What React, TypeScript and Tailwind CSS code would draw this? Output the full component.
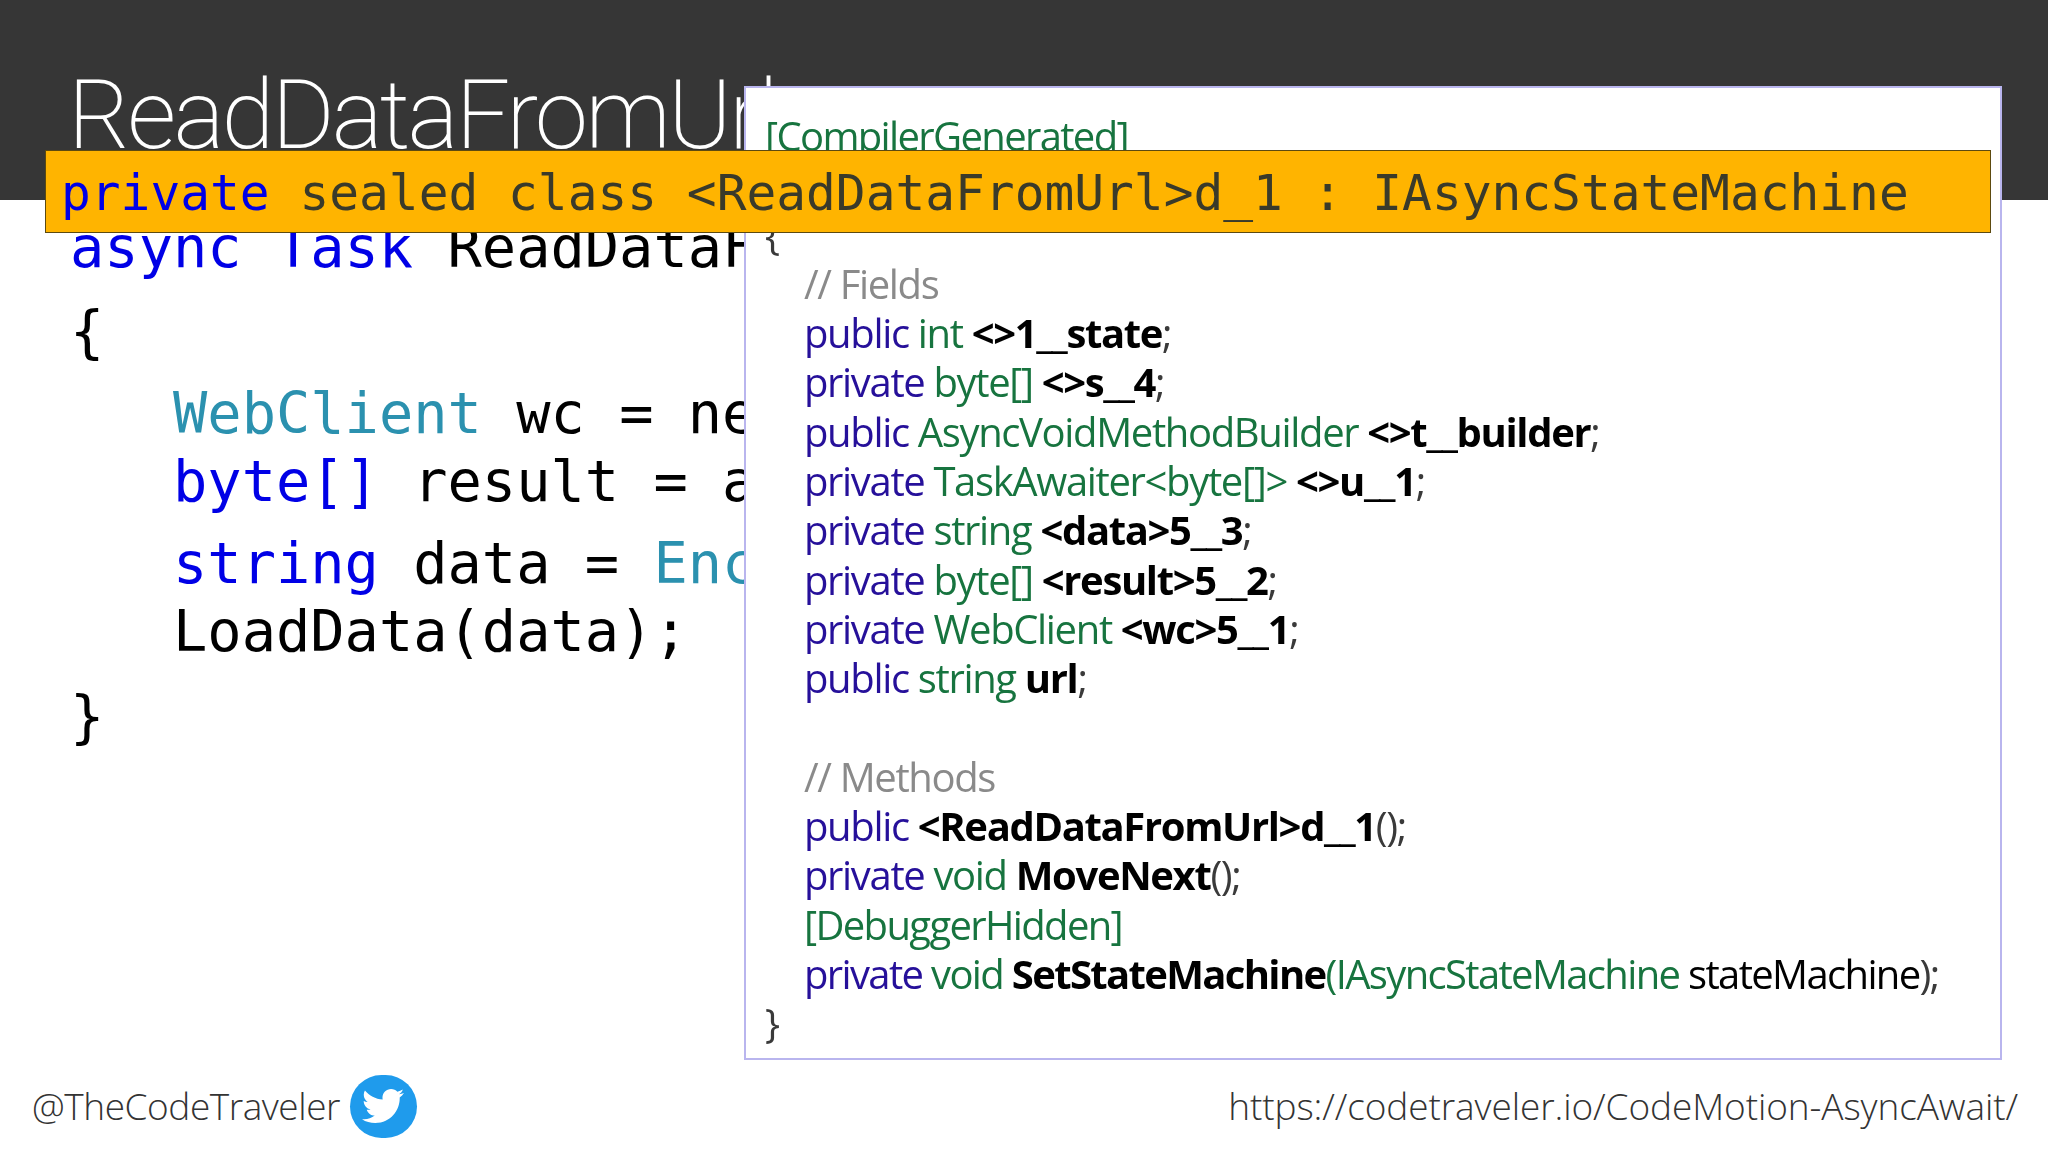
import { FaTwitter } from 'react-icons/fa';

type Tok = { t: string; c: 'k' | 'y' | 'b' | 'p' | 'n' };

const toneClass = {
  k: 'text-[#26109a]',
  y: 'text-[#17743f]',
  b: 'font-bold text-black',
  p: 'text-[#3a3a3a]',
  n: 'text-black',
};

function CodeRow({ toks, indent = true, tight = false }: { toks: Tok[]; indent?: boolean; tight?: boolean }) {
  return (
    <div className={`h-[49.3px] leading-[49.3px] whitespace-pre ${indent ? 'pl-[39px]' : ''} ${tight ? 'tracking-[-1.65px]' : ''}`}>
      {toks.map((tok, i) => (
        <span key={i} className={toneClass[tok.c]}>{tok.t}</span>
      ))}
    </div>
  );
}

const k = (t: string): Tok => ({ t, c: 'k' });
const y = (t: string): Tok => ({ t, c: 'y' });
const b = (t: string): Tok => ({ t, c: 'b' });
const p = (t: string): Tok => ({ t, c: 'p' });
const n = (t: string): Tok => ({ t, c: 'n' });

const fields: Tok[][] = [
  [k('public '), y('int '), b('<>1__state'), p(';')],
  [k('private '), y('byte[] '), b('<>s__4'), p(';')],
  [k('public '), y('AsyncVoidMethodBuilder '), b('<>t__builder'), p(';')],
  [k('private '), y('TaskAwaiter<byte[]> '), b('<>u__1'), p(';')],
  [k('private '), y('string '), b('<data>5__3'), p(';')],
  [k('private '), y('byte[] '), b('<result>5__2'), p(';')],
  [k('private '), y('WebClient '), b('<wc>5__1'), p(';')],
  [k('public '), y('string '), b('url'), p(';')],
];

export default function App() {
  return (
    <div className="relative flex h-[1152px] w-[2048px] flex-col overflow-hidden bg-white font-['Open_Sans',sans-serif]">
      <header className="h-[200px] bg-[#363636] pl-[68px] pt-[54px]">
        <h1 className="font-['Roboto',sans-serif] text-[96px] font-extralight leading-[122px] tracking-[-2.8px] text-white">ReadDataFromUrl</h1>
      </header>

      <main className="flex-1 pl-[70px] pt-[13px] font-['DejaVu_Sans_Mono',monospace] text-[57px] leading-[68px] text-black">
        <div className="whitespace-pre"><span className="text-[#0000e6]">async Task </span>ReadDataFromUrl()</div>
        <div className="mt-[16px]">{'{'}</div>
        <div className="pl-[103px]">
          <div className="mt-[14px] whitespace-pre"><span className="text-[#2b91af]">WebClient</span> wc = new</div>
          <div className="whitespace-pre"><span className="text-[#0000e6]">byte[]</span> result = a</div>
          <div className="mt-[14px] whitespace-pre"><span className="text-[#0000e6]">string</span> data = <span className="text-[#2b91af]">Enc</span></div>
          <div className="whitespace-pre">LoadData(data);</div>
        </div>
        <div className="mt-[17px]">{'}'}</div>
      </main>

      <footer className="flex h-[92px] items-center justify-between pl-[32px] pr-[30px] text-[37px] font-light tracking-[-0.1px] text-[#333333]">
        <div className="flex items-center gap-[10px]">
          <span className="tracking-[-0.45px]">@TheCodeTraveler</span>
          <span className="flex h-[63px] w-[67px] items-center justify-center rounded-full bg-[#1f9bec] text-white">
            <FaTwitter size={42} />
          </span>
        </div>
        <span>https://codetraveler.io/CodeMotion-AsyncAwait/</span>
      </footer>

      <section className="absolute left-[744px] top-[86px] h-[974px] w-[1258px] border-2 border-[#b9b5ee] bg-white pl-[19px] pt-[23px] text-[40px] tracking-[-1.35px] blur-[0.4px]">
        <CodeRow indent={false} tight toks={[y('[CompilerGenerated]')]} />
        <div className="h-[49.3px]" />
        <CodeRow indent={false} toks={[p('{')]} />
        <div className="h-[49.3px] whitespace-pre pl-[39px] leading-[49.3px] text-[#8a8a8a]">// Fields</div>
        {fields.map((toks, i) => <CodeRow key={i} toks={toks} />)}
        <div className="h-[49.3px]" />
        <div className="h-[49.3px] whitespace-pre pl-[39px] leading-[49.3px] text-[#8a8a8a]">// Methods</div>
        <CodeRow toks={[k('public '), b('<ReadDataFromUrl>d__1'), p('();')]} />
        <CodeRow toks={[k('private '), y('void '), b('MoveNext'), p('();')]} />
        <CodeRow tight toks={[y('[DebuggerHidden]')]} />
        <CodeRow tight toks={[k('private '), y('void '), b('SetStateMachine'), y('(IAsyncStateMachine '), n('stateMachine'), p(');')]} />
        <CodeRow indent={false} toks={[p('}')]} />
      </section>

      <div className="absolute left-[45px] top-[150px] flex h-[83px] w-[1946px] items-center whitespace-pre border border-[#5c4a10] bg-[#ffb400] pl-[15px] pt-[3px] font-['DejaVu_Sans_Mono',monospace] text-[49.5px] text-[#3a3a2a]">
        <span className="text-[#0000e6]">private</span> sealed class &lt;ReadDataFromUrl&gt;d_1 : IAsyncStateMachine
      </div>
    </div>
  );
}
